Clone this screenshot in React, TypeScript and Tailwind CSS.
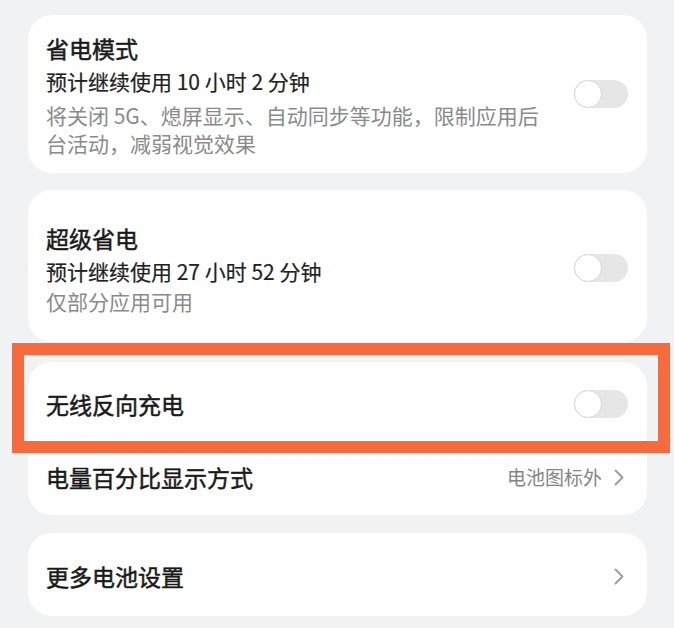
import React from "react";

const font = { fontFamily: '"Noto Sans CJK SC", "Noto Sans", sans-serif' };

function Toggle() {
  return (
    <div className="relative h-[28px] w-[54px] shrink-0 rounded-full bg-[#e6e6e6]">
      <div className="absolute left-0 top-0 h-[28px] w-[28px] rounded-full border border-[#d9d9d9] bg-white" />
    </div>
  );
}

function Chevron() {
  return (
    <svg width="10" height="17" viewBox="0 0 10 17" fill="none" className="shrink-0">
      <path d="M1.5 1.5 L8.5 8.5 L1.5 15.5" stroke="#9b9b9b" strokeWidth="1.8" strokeLinecap="round" strokeLinejoin="round" />
    </svg>
  );
}

const titleCls = "text-[23px] font-normal text-[#1a1a1a] [-webkit-text-stroke:0.5px_#1a1a1a]";

export default function App() {
  return (
    <div className="relative h-[628px] w-[674px] overflow-hidden bg-[#f1f2f4]" style={font}>
      <div className="flex flex-col pl-[28px] pr-[27px] pt-[15px]">
        {/* Card 1 */}
        <div className="flex items-center justify-between rounded-[24px] bg-white pb-[16px] pl-[18px] pr-[19px] pt-[16px]">
          <div className="flex w-[500px] flex-col">
            <div className={titleCls + " leading-[34px]"}>省电模式</div>
            <div className="text-[21px] leading-[32px] text-[#222222] [-webkit-text-stroke:0.2px_#222222]">预计继续使用 10 小时 2 分钟</div>
            <div className="mt-[4px] text-[21px] leading-[28px] text-[#8a8a8a]">
              将关闭 5G、熄屏显示、自动同步等功能，限制应用后台活动，减弱视觉效果
            </div>
          </div>
          <Toggle />
        </div>

        {/* Card 2 */}
        <div className="mt-[17px] flex items-center justify-between rounded-[24px] bg-white pb-[27px] pl-[18px] pr-[19px] pt-[31px]">
          <div className="flex w-[500px] flex-col">
            <div className={titleCls + " leading-[34px]"}>超级省电</div>
            <div className="text-[21px] leading-[32px] text-[#222222] [-webkit-text-stroke:0.2px_#222222]">预计继续使用 27 小时 52 分钟</div>
            <div className="text-[21px] leading-[28px] text-[#8a8a8a]">仅部分应用可用</div>
          </div>
          <Toggle />
        </div>

        {/* Card 3 */}
        <div className="mt-[20px] flex flex-col rounded-[24px] bg-white">
          <div className="flex h-[84px] items-center justify-between pl-[18px] pr-[19px]">
            <div className={titleCls}>无线反向充电</div>
            <Toggle />
          </div>
          <div className="flex h-[69px] items-center justify-between pb-[7px] pl-[18px] pr-[23px]">
            <div className={titleCls}>电量百分比显示方式</div>
            <div className="flex items-center gap-[12px]">
              <span className="text-[19px] text-[#858585]">电池图标外</span>
              <Chevron />
            </div>
          </div>
        </div>

        {/* Card 4 */}
        <div className="mt-[18px] flex h-[83px] items-center justify-between rounded-[24px] bg-white pl-[18px] pr-[23px] pt-[4px]">
          <div className={titleCls}>更多电池设置</div>
          <Chevron />
        </div>
      </div>

      {/* Orange highlight frame */}
      <div className="absolute left-[12px] top-[343px] h-[110px] w-[658px] border-[12px] border-[#f56b3d]" />
    </div>
  );
}
